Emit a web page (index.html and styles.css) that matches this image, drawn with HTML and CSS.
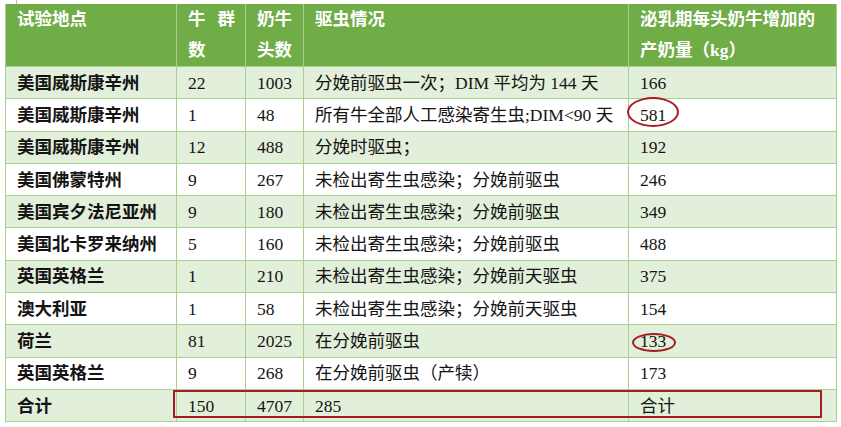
FILE: index.html
```html
<!DOCTYPE html>
<html lang="zh-CN">
<head>
<meta charset="utf-8">
<title>驱虫试验</title>
<link rel="stylesheet" href="styles.css">
</head>
<body>
<div class="page">
  <div class="tick"></div>
  <table class="data">
    <colgroup>
      <col class="c1"><col class="c2"><col class="c3"><col class="c4"><col class="c5">
    </colgroup>
    <thead>
      <tr>
        <th>试验地点</th>
        <th>牛<span class="gap"></span>群<br>数</th>
        <th>奶牛<br>头数</th>
        <th>驱虫情况</th>
        <th>泌乳期每头奶牛增加的<br>产奶量（kg）</th>
      </tr>
    </thead>
    <tbody>
      <tr class="band"><td class="loc">美国威斯康辛州</td><td>22</td><td>1003</td><td>分娩前驱虫一次；DIM 平均为 144 天</td><td>166</td></tr>
      <tr><td class="loc">美国威斯康辛州</td><td>1</td><td>48</td><td>所有牛全部人工感染寄生虫;DIM&lt;90 天</td><td>581</td></tr>
      <tr class="band"><td class="loc">美国威斯康辛州</td><td>12</td><td>488</td><td>分娩时驱虫；</td><td>192</td></tr>
      <tr><td class="loc">美国佛蒙特州</td><td>9</td><td>267</td><td>未检出寄生虫感染；分娩前驱虫</td><td>246</td></tr>
      <tr class="band"><td class="loc">美国宾夕法尼亚州</td><td>9</td><td>180</td><td>未检出寄生虫感染；分娩前驱虫</td><td>349</td></tr>
      <tr><td class="loc">美国北卡罗来纳州</td><td>5</td><td>160</td><td>未检出寄生虫感染；分娩前驱虫</td><td>488</td></tr>
      <tr class="band"><td class="loc">英国英格兰</td><td>1</td><td>210</td><td>未检出寄生虫感染；分娩前天驱虫</td><td>375</td></tr>
      <tr><td class="loc">澳大利亚</td><td>1</td><td>58</td><td>未检出寄生虫感染；分娩前天驱虫</td><td>154</td></tr>
      <tr class="band"><td class="loc">荷兰</td><td>81</td><td>2025</td><td>在分娩前驱虫</td><td>133</td></tr>
      <tr><td class="loc">英国英格兰</td><td>9</td><td>268</td><td>在分娩前驱虫（产犊）</td><td>173</td></tr>
      <tr class="band"><td class="loc">合计</td><td>150</td><td>4707</td><td>285</td><td>合计</td></tr>
    </tbody>
  </table>
  <div class="mark ring-a"></div>
  <div class="mark ring-b"></div>
  <div class="mark box-total"></div>
</div>
</body>
</html>
```

FILE: styles.css
```css
html, body {
  margin: 0;
  padding: 0;
  background: #ffffff;
}

.page {
  position: relative;
  width: 841px;
  height: 427px;
  padding: 4px 0 0 5px;
  box-sizing: border-box;
  font-family: "Liberation Serif", "Noto Sans CJK SC", serif;
  font-size: 17.5px;
  color: #141414;
}

.tick {
  position: absolute;
  left: 16px;
  top: 0;
  width: 1px;
  height: 4px;
  background: #b8b8b8;
}

.data {
  border-collapse: collapse;
  table-layout: fixed;
  width: 831px;
}

.c1 { width: 171px; }
.c2 { width: 69px; }
.c3 { width: 58px; }
.c4 { width: 325px; }
.c5 { width: 208px; }

.data th,
.data td {
  border: 1px solid #a9d08e;
  padding: 0 0 0 11px;
  text-align: left;
  white-space: nowrap;
  overflow: hidden;
}

.data thead th {
  background: #70ad47;
  color: #ffffff;
  font-weight: bold;
  line-height: 31px;
  height: 62px;
  vertical-align: top;
  border-top: none;
  border-color: #a9d08e;
}

.gap {
  display: inline-block;
  width: 12px;
}

.data tbody td {
  height: 31.3px;
  line-height: 20px;
  vertical-align: middle;
}

.data tbody tr.band td {
  background: #e2efda;
}

.data td.loc {
  font-weight: bold;
}

.mark {
  position: absolute;
  box-sizing: border-box;
  border: 2px solid #a61c22;
}

.ring-a {
  left: 627px;
  top: 97px;
  width: 52px;
  height: 30px;
  border-radius: 50%;
}

.ring-b {
  left: 632px;
  top: 333px;
  width: 44px;
  height: 19px;
  border-radius: 50%;
}

.box-total {
  left: 173px;
  top: 390px;
  width: 649px;
  height: 28px;
  border-width: 2.5px;
}
```
